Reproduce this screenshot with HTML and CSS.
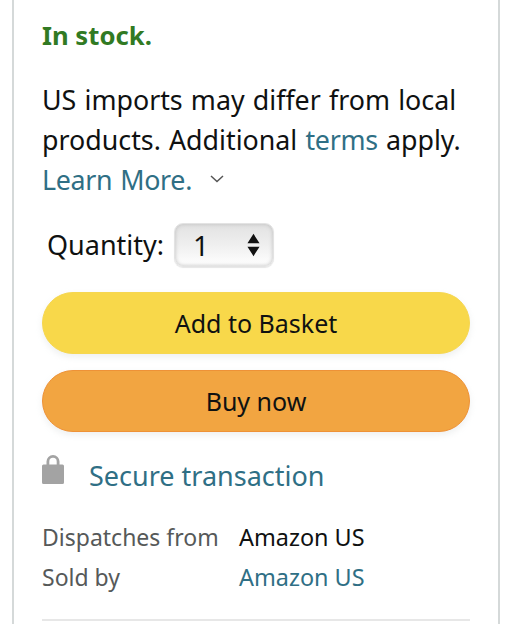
FILE: index.html
```html
<!DOCTYPE html>
<html lang="en">
<head>
<meta charset="utf-8">
<title>Buy box</title>
<link rel="stylesheet" href="styles.css">
</head>
<body>
<main class="card">
  <p class="stock">In stock.</p>
  <p class="notice">US imports may differ from local products. Additional <a href="#">terms</a> apply. <a href="#">Learn More.</a>
    <svg class="chevron" viewBox="0 0 14 8" aria-hidden="true"><path d="M1 1l6 5.5L13 1" fill="none" stroke="#555" stroke-width="1.5"/></svg>
  </p>
  <div class="quantity">
    <span class="quantity-label">Quantity:</span>
    <div class="select"><span>1</span>
      <svg class="arrows" viewBox="0 0 14 24" aria-hidden="true"><path d="M7 0l6.500 10H.5zM7 24L.5 14h13z" fill="#111"/></svg>
    </div>
  </div>
  <button class="btn btn-basket">Add to Basket</button>
  <button class="btn btn-buy">Buy now</button>
  <div class="secure">
    <svg class="lock" viewBox="0 0 22 30" aria-hidden="true"><path d="M4.500 12V7.500a6.500 6.500 0 0 1 13 0V12h-2.800V7.500a3.700 3.700 0 0 0-7.400 0V12z" fill="#a3a3a3"/><path d="M1.500 10.500h19a1.500 1.500 0 0 1 1.500 1.500v16.500a1.500 1.500 0 0 1-1.500 1.500h-19A1.500 1.500 0 0 1 0 28.500V12a1.500 1.500 0 0 1 1.500-1.500z" fill="#a3a3a3"/></svg>
    <a href="#">Secure transaction</a>
  </div>
  <dl class="meta">
    <dt>Dispatches from</dt><dd>Amazon US</dd>
    <dt>Sold by</dt><dd><a href="#">Amazon US</a></dd>
  </dl>
  <hr class="rule">
</main>
</body>
</html>
```
FILE: styles.css
```css
* { box-sizing: border-box; }
html, body { margin: 0; height: 100%; background: #fff; overflow: hidden; }
body { font-family: "Noto Sans", "Open Sans", sans-serif; color: #0f1111; }
a { color: #2f6f85; text-decoration: none; }
.card {
  width: 488px; height: 624px; margin-left: 12px;
  border-left: 2px solid #d5d9d9; border-right: 2px solid #d5d9d9;
  padding: 18px 28px 0;
}
.stock { margin: 0; font-size: 25.700px; line-height: 36px; font-weight: 700; color: #317a23; }
.notice { margin: 26px 0 0; font-size: 26.800px; line-height: 40px; word-spacing: 1.200px; }
.notice a { letter-spacing: -.3px; }
.chevron { width: 14px; height: 8px; margin: 0 0 8px 10px; vertical-align: middle; }
.quantity { display: flex; align-items: center; gap: 10px; margin: 23px 0 0 5px; font-size: 27px; }
.quantity-label { margin-bottom: 2px; }
.select {
  width: 100px; height: 44px; display: flex; align-items: center; justify-content: space-between;
  padding: 0 13px 0 18px; border: 1.500px solid #e3e3e3; border-radius: 9px; font-size: 28px;
  background: linear-gradient(#e2e2e2, #efefef 50%, #fff);
  box-shadow: inset 0 0 4px #bdbdbd, 0 1px 1px #e6e6e6;
}
.arrows { width: 13px; height: 24px; }
.btn {
  display: block; width: 428px; height: 62px; border-radius: 31px; font: inherit; font-size: 25px; color: #0f1111;
  box-shadow: 0 3px 6px rgba(213,217,217,.4);
}
.btn-basket { margin-top: 25px; background: #f8d84a; border: 1px solid #f6d750; }
.btn-buy { margin-top: 16px; background: #f2a541; border: 1px solid #ee9237; }
.secure { display: flex; align-items: center; gap: 25px; margin-top: 25px; font-size: 27px; }
.lock { width: 22px; height: 30px; margin-top: -13px; }
.meta { display: grid; grid-template-columns: 197px 1fr; grid-auto-rows: 40px; align-items: center; margin: 23px 0 0; font-size: 23.400px; }
.meta dt { color: #565959; font-size: 23px; }
.meta dd { margin: 0; }
.rule { margin: 22px 0 0; border: 0; border-top: 2px solid #e7e7e7; }
```
